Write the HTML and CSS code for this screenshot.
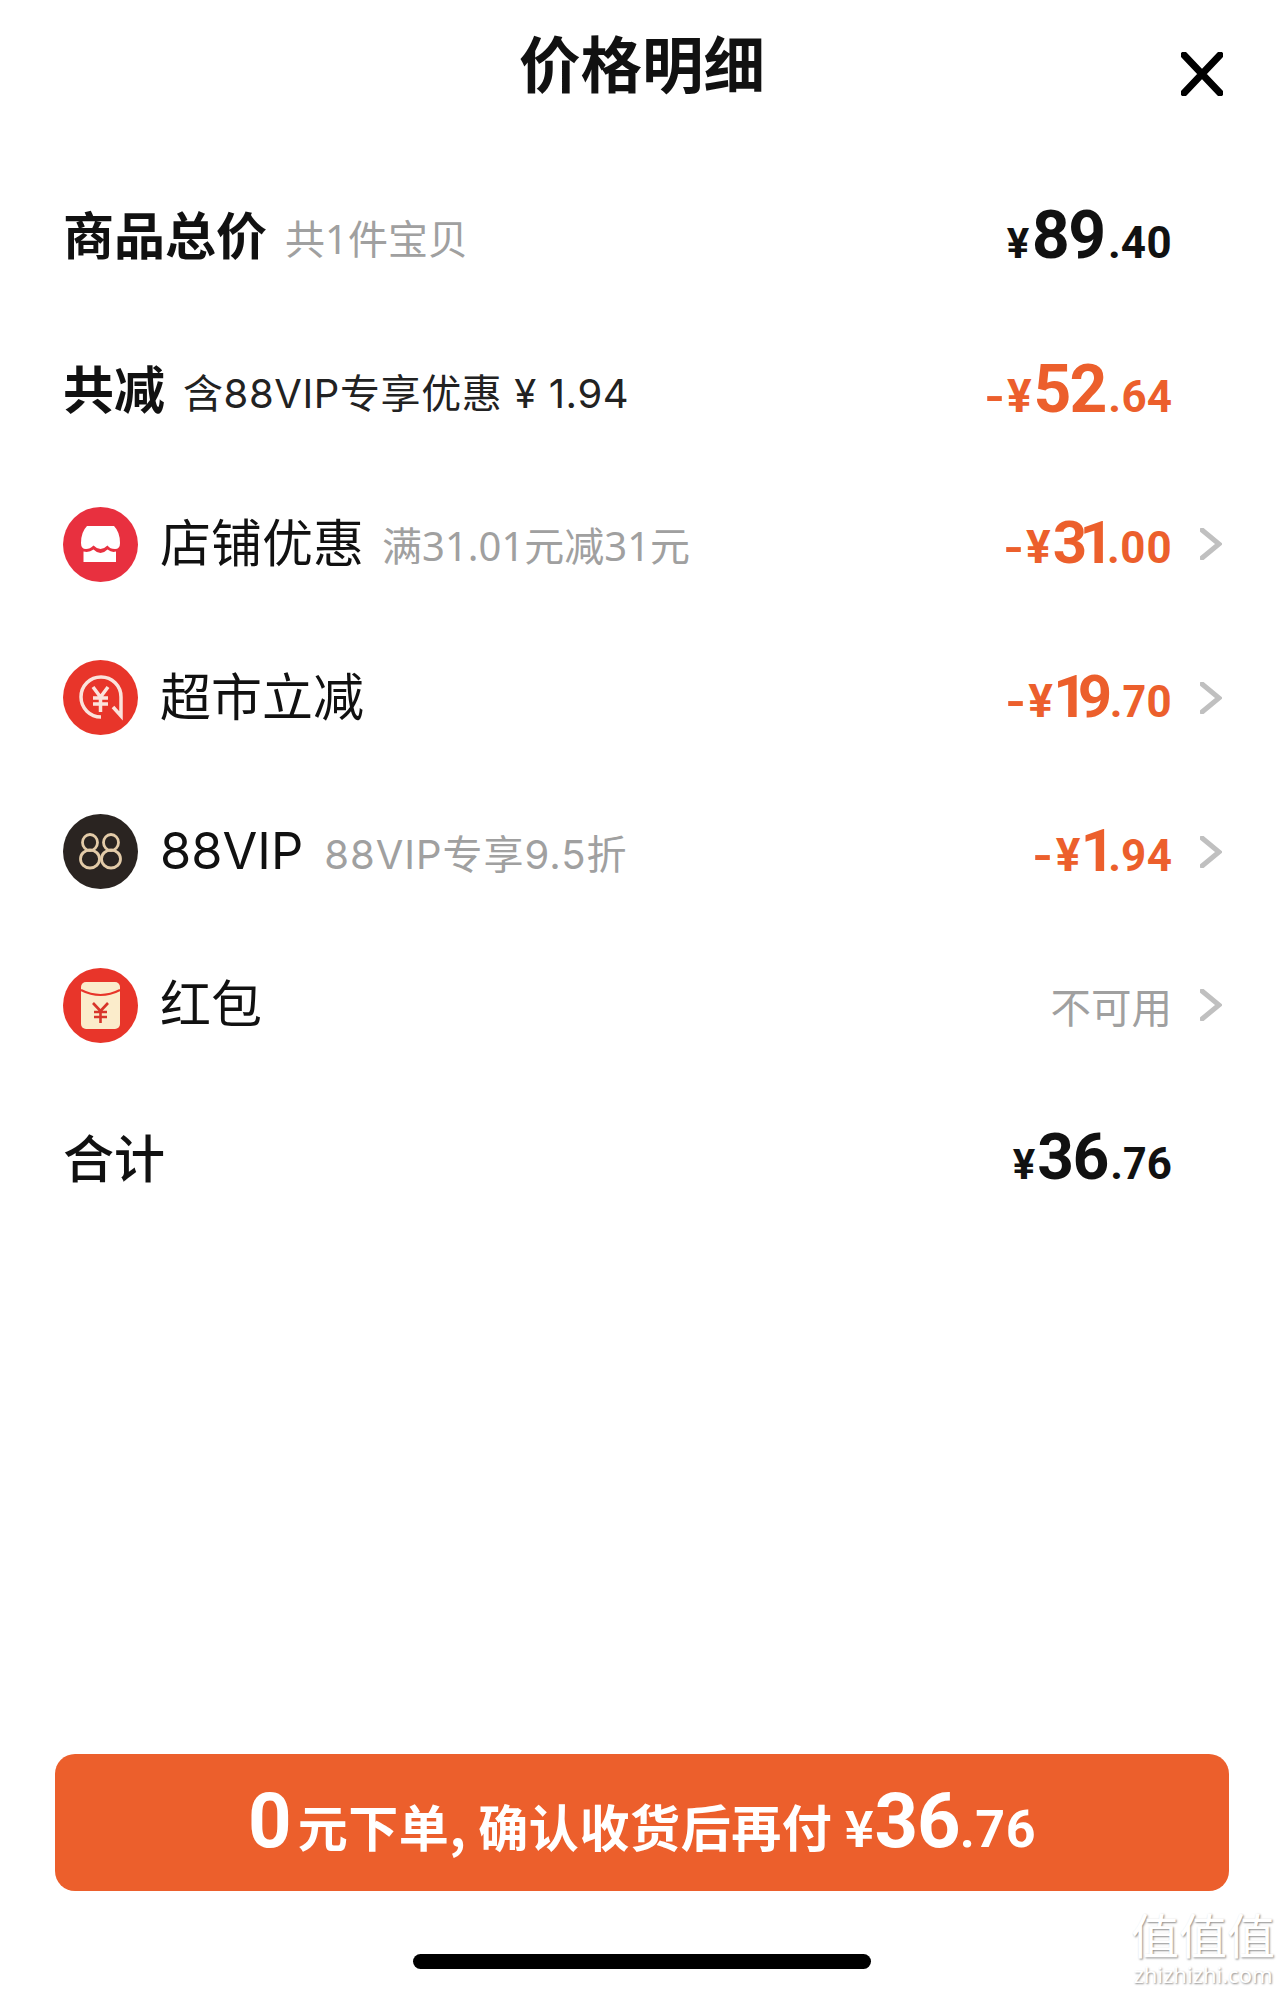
FILE: index.html
```html
<!DOCTYPE html>
<html lang="zh-CN">
<head>
  <meta charset="UTF-8">
  <title>价格明细</title>
  <link rel="stylesheet" href="styles.css">
</head>
<body>
  <div class="sheet">
    <div class="header">
      <h2>价格明细</h2>
      <svg class="close" viewBox="0 0 42 44"><path d="M3 3 L39 41 M39 3 L3 41"/></svg>
    </div>

    <div class="rows">
      <div class="row">
        <span class="title strong">商品总价</span>
        <span class="note">共1件宝贝</span>
        <span class="price"><span class="yen">¥</span><span class="int">89</span><span class="dec">.40</span></span>
        <span class="no-arrow"></span>
      </div>

      <div class="row">
        <span class="title strong">共减</span>
        <span class="note dark">含88VIP专享优惠 ¥ 1.94</span>
        <span class="price orange"><span class="minus">-</span><span class="yen">¥</span><span class="int">52</span><span class="dec">.64</span></span>
        <span class="no-arrow"></span>
      </div>

      <div class="row">
        <svg class="icon" viewBox="0 0 75 75">
          <circle cx="37.5" cy="37.5" r="37.5" fill="#e8303f"/>
          <path fill="#fff" d="M24 19 H51 Q57 25 57 36 Q57 42 52 42 Q47 42 44.500 38.500 Q41 42 37.500 42 Q34 42 30.500 38.500 Q27 42 23 42 Q18 42 18 36 Q18 25 24 19 Z"/>
          <path fill="#fff" d="M20.500 44.500 Q26 46 30.500 42.500 Q34 46 37.500 46 Q41 46 44.500 42.500 Q49 46 53 44.500 V55 H20.500 Z"/>
        </svg>
        <span class="title">店铺优惠</span>
        <span class="note">满31.01元减31元</span>
        <span class="price orange"><span class="minus">-</span><span class="yen">¥</span><span class="int small">31</span><span class="dec">.00</span></span>
        <svg class="arrow" viewBox="0 0 22 32"><path d="M2 2 L19 16 L2 30"/></svg>
      </div>

      <div class="row">
        <svg class="icon" viewBox="0 0 75 75">
          <circle cx="37.500" cy="37.500" r="37.500" fill="#e8352a"/>
          <g fill="none" stroke="#fbe3dc" stroke-width="3.500">
            <path d="M38 57 A20 20 0 1 1 58 37 V56 L50 47"/>
            <path d="M30 27 L37.500 37 L45 27 M30 38 H45 M30 44 H45 M37.500 37 V52"/>
          </g>
        </svg>
        <span class="title">超市立减</span>
        <span class="price orange"><span class="minus">-</span><span class="yen">¥</span><span class="int small">19</span><span class="dec">.70</span></span>
        <svg class="arrow" viewBox="0 0 22 32"><path d="M2 2 L19 16 L2 30"/></svg>
      </div>

      <div class="row">
        <svg class="icon" viewBox="0 0 75 75">
          <circle cx="37.500" cy="37.500" r="37.500" fill="#2a2421"/>
          <g fill="none" stroke="#e3cba8" stroke-width="2.800">
            <ellipse cx="27" cy="28.500" rx="7.500" ry="8"/>
            <ellipse cx="27" cy="45" rx="9.500" ry="9"/>
            <ellipse cx="48" cy="28.500" rx="7.500" ry="8"/>
            <ellipse cx="48" cy="45" rx="9.500" ry="9"/>
          </g>
        </svg>
        <span class="title latin">88VIP</span>
        <span class="note latin-note">88VIP专享9.5折</span>
        <span class="price orange"><span class="minus">-</span><span class="yen">¥</span><span class="int small">1</span><span class="dec">.94</span></span>
        <svg class="arrow" viewBox="0 0 22 32"><path d="M2 2 L19 16 L2 30"/></svg>
      </div>

      <div class="row">
        <svg class="icon" viewBox="0 0 75 75">
          <circle cx="37.500" cy="37.500" r="37.500" fill="#e8352a"/>
          <rect x="18" y="14" width="39" height="47" rx="5" fill="#fbeccb"/>
          <path d="M18 22 Q37.500 32 57 22" fill="none" stroke="#e8352a" stroke-width="2"/>
          <path d="M30 35 L37.500 43 L45 35 M31 44 H44 M31 49 H44 M37.500 43 V55" fill="none" stroke="#d8352a" stroke-width="2.600"/>
        </svg>
        <span class="title">红包</span>
        <span class="price muted">不可用</span>
        <svg class="arrow" viewBox="0 0 22 32"><path d="M2 2 L19 16 L2 30"/></svg>
      </div>

      <div class="row">
        <span class="title total">合计</span>
        <span class="price"><span class="yen">¥</span><span class="int total-int">36</span><span class="dec">.76</span></span>
        <span class="no-arrow"></span>
      </div>
    </div>

    <div class="footer">
      <button class="pay">
        <span class="big">0</span><span class="pay-text">元下单, 确认收货后再付 ¥</span><span class="big">36</span><span class="pay-dec">.76</span>
      </button>
      <div class="home-bar"></div>
    </div>

    <div class="watermark">
      <div class="wm-logo">值值值</div>
      <div class="wm-url">zhizhizhi.com</div>
    </div>
  </div>
</body>
</html>
```

FILE: styles.css
```css
* { margin: 0; padding: 0; box-sizing: border-box; }
body { background: #fff; font-family: "Noto Sans", "Noto Sans CJK SC", sans-serif; color: #111; }

.sheet {
  position: relative;
  width: 1284px;
  height: 1993px;
  display: flex;
  flex-direction: column;
  overflow: hidden;
}

.header {
  height: 160px;
  padding: 26px 61px 0 0;
  display: flex;
  align-items: flex-start;
  justify-content: flex-end;
  position: relative;
}

.header h2 {
  position: absolute;
  left: 0;
  right: 0;
  top: 20px;
  text-align: center;
  font-size: 61.500px;
  line-height: 84px;
  font-weight: 700;
  font-family: "Noto Sans CJK SC", sans-serif;
}

.close {
  width: 42px;
  height: 44px;
  margin-top: 26px;
}
.close path { fill: none; stroke: #000; stroke-width: 7px; stroke-linecap: round; }

.rows { display: flex; flex-direction: column; }

.row {
  height: 153.700px;
  padding: 0 61px 0 63px;
  display: flex;
  align-items: center;
}

.icon { width: 75px; height: 75px; margin-right: 22px; flex-shrink: 0; }

.title {
  font-family: "Noto Sans CJK SC", sans-serif;
  font-size: 51px;
  font-weight: 400;
  color: #111;
  padding-bottom: 8px;
}
.title.strong { font-weight: 700; }
.title.total { font-weight: 500; padding-bottom: 6px; }
.title.latin { font-family: Inter, sans-serif; font-size: 50.500px; padding-bottom: 2px; }

.note {
  margin-left: 18px;
  font-family: "Noto Sans", "Noto Sans CJK SC", sans-serif;
  font-size: 40px;
  color: #a0a0a0;
}
.note.dark {
  color: #222;
  font-family: Inter, "Noto Sans CJK SC", sans-serif;
  letter-spacing: 0.6px;
}
.note.latin-note {
  margin-left: 21px;
  font-family: Inter, "Noto Sans CJK SC", sans-serif;
  letter-spacing: 1px;
}

.price {
  margin-left: auto;
  padding-bottom: 3px;
  font-family: Roboto, sans-serif;
  font-weight: 700;
  font-variant-numeric: proportional-nums;
  display: flex;
  align-items: baseline;
  color: #111;
}
.price.orange { color: #ec5f2c; }
.price.muted {
  font-family: "Noto Sans CJK SC", sans-serif;
  font-weight: 400;
  font-size: 40.500px;
  padding-bottom: 0;
  color: #a0a0a0;
}

.minus { font-size: 44px; margin-right: 4px; transform: scaleX(1.2); }
.yen { font-size: 42px; margin-right: 2px; }
.orange .yen { font-size: 46px; margin-right: 2px; }
.int { font-size: 66px; letter-spacing: -2px; margin-right: 3px; }
.int.small { font-size: 60px; letter-spacing: -6px; margin-right: 3px; }
.int.total-int { font-size: 64px; }
.dec { font-size: 44px; }

.arrow { width: 22px; height: 32px; margin-left: 28px; margin-right: 1px; flex-shrink: 0; }
.arrow path { fill: none; stroke: #c0c0c0; stroke-width: 5px; stroke-linecap: round; }
.no-arrow { width: 22px; margin-left: 28px; margin-right: 1px; flex-shrink: 0; }

.footer {
  margin-top: auto;
  padding: 0 55px 24px;
  display: flex;
  flex-direction: column;
  align-items: center;
}

.pay {
  width: 100%;
  height: 137px;
  border: none;
  border-radius: 20px;
  background: #ec5f2c;
  color: #fff;
  display: flex;
  align-items: baseline;
  justify-content: center;
  padding-top: 22px;
  font-family: Roboto, sans-serif;
  font-weight: 700;
}
.pay .big { font-size: 76px; letter-spacing: -1px; }
.pay-text {
  font-family: "Noto Sans CJK SC", sans-serif;
  font-size: 50px;
  letter-spacing: 0.6px;
  margin-left: 7px;
}
.pay-dec { font-size: 52px; letter-spacing: 0.5px; }

.home-bar {
  width: 458px;
  height: 15px;
  margin-top: 63px;
  background: #000;
  border-radius: 8px;
}

.watermark {
  position: absolute;
  right: 9px;
  bottom: 7px;
  text-align: center;
  color: #fff;
  text-shadow: 1px 1px 2px rgba(0,0,0,0.45);
}
.wm-logo {
  font-family: "Noto Sans CJK SC", sans-serif;
  font-size: 48px;
  line-height: 58px;
}
.wm-url {
  font-family: "Noto Sans", sans-serif;
  font-size: 22px;
  line-height: 24px;
}
```
